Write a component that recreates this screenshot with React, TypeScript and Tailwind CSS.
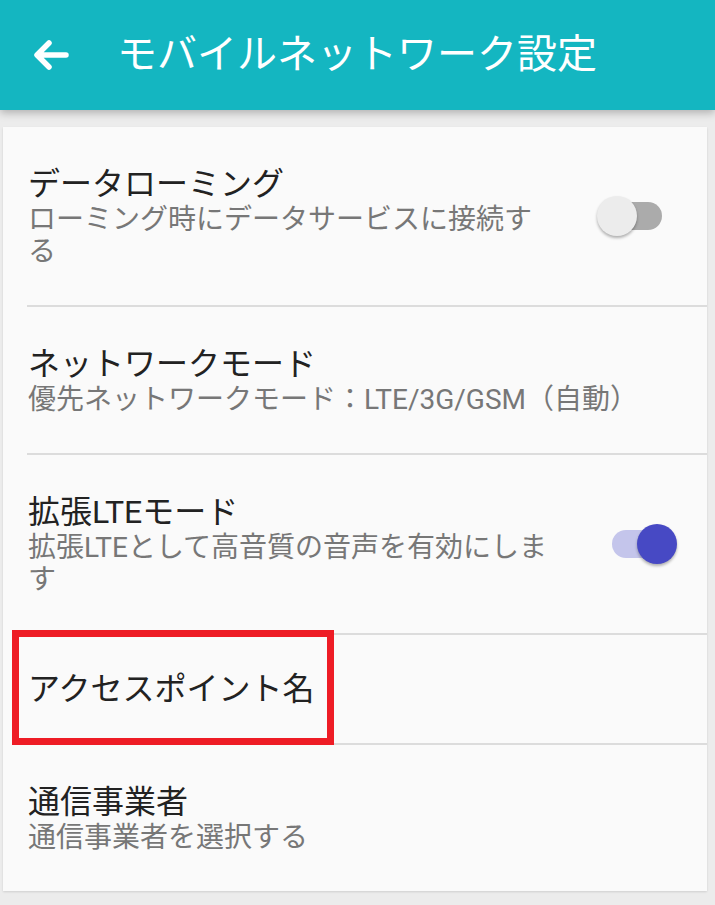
import React from "react"

const font = { fontFamily: 'Roboto, "Noto Sans CJK JP", sans-serif' }

function Toggle({ on }: { on: boolean }) {
  return (
    <div className="relative w-[80px] h-[40px] shrink-0">
      <div
        className={
          on
            ? "absolute left-[15px] top-[6px] w-[50px] h-[28px] rounded-full bg-[#c4c5eb]"
            : "absolute left-[15px] top-[6px] w-[50px] h-[28px] rounded-full bg-[#ababab]"
        }
      />
      <div
        className={
          on
            ? "absolute right-0 top-0 w-[40px] h-[40px] rounded-full bg-[#4749c4] shadow-[0_2px_3px_rgba(0,0,0,0.3)]"
            : "absolute left-0 top-0 w-[40px] h-[40px] rounded-full bg-[#ececec] shadow-[0_2px_3px_rgba(0,0,0,0.3)]"
        }
      />
    </div>
  )
}

type Row = {
  title: string
  sub?: string
  toggle?: boolean
}

const rows: Row[] = [
  { title: "データローミング", sub: "ローミング時にデータサービスに接続する", toggle: false },
  { title: "ネットワークモード", sub: "優先ネットワークモード：LTE/3G/GSM（自動）" },
  { title: "拡張LTEモード", sub: "拡張LTEとして高音質の音声を有効にします", toggle: true },
  { title: "アクセスポイント名" },
  { title: "通信事業者", sub: "通信事業者を選択する" },
]

export default function App() {
  return (
    <div className="min-h-[905px] bg-[#ececec]" style={font}>
      <header className="relative h-[110px] bg-[#14b6c1] flex items-center shadow-[0_3px_8px_rgba(0,0,0,0.25)] z-10">
        <svg width="40" height="40" viewBox="0 0 40 40" className="ml-[31px]">
          <path
            d="M35 20 H7 M18 8 L6 20 L18 32"
            fill="none"
            stroke="#ffffff"
            strokeWidth="5.5"
            strokeLinecap="round"
            strokeLinejoin="round"
          />
        </svg>
        <h1 className="ml-[46px] text-[40px] leading-none text-white">
          モバイルネットワーク設定
        </h1>
      </header>

      <div className="pt-[17px] pl-[3px] pr-[8px]">
        <div className="bg-[#fafafa] shadow-[0_1px_2px_rgba(0,0,0,0.12)]">
          {rows.map((r, i) => (
            <div key={r.title} className="relative">
              {i > 0 && <div className="ml-[24px] h-[2px] bg-[#dcdcdc]" />}
              <div
                className={
                  r.sub
                    ? "flex items-center pl-[25px] pr-[30px] py-[37px]"
                    : "flex items-center pl-[25px] pr-[30px] py-[34px]"
                }
              >
                <div className="flex-1 min-w-0">
                  <div className={r.toggle !== undefined ? "max-w-[522px]" : ""}>
                    <div className="text-[32px] leading-[40px] text-[#222222]">{r.title}</div>
                    {r.sub && (
                      <div className="text-[28px] leading-[32px] text-[#777777]">{r.sub}</div>
                    )}
                  </div>
                </div>
                {r.toggle !== undefined && <Toggle on={r.toggle} />}
              </div>
              {i === 3 && (
                <div className="absolute z-10 left-[9px] top-[-3px] w-[322px] h-[115px] border-[7px] border-[#ee1c25]" />
              )}
            </div>
          ))}
        </div>
      </div>
    </div>
  )
}
